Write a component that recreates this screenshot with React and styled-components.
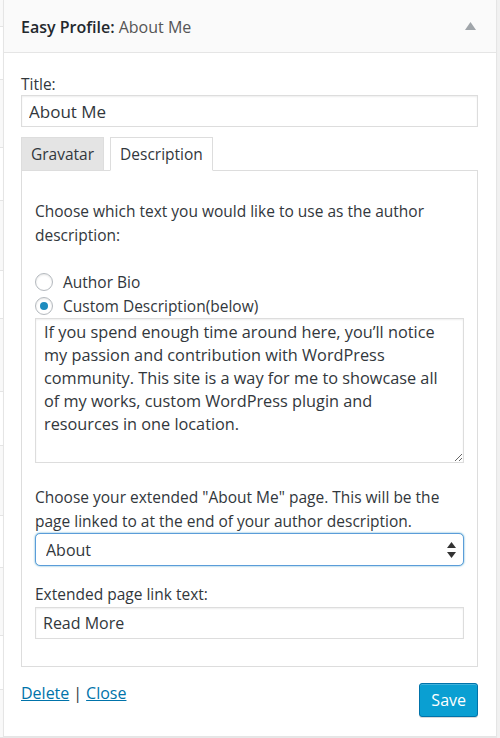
import React, { useState } from 'react';
import styled, { createGlobalStyle } from 'styled-components';

const GlobalStyle = createGlobalStyle`
  html, body {
    margin: 0;
    padding: 0;
    background: #f1f1f1;
  }
  body {
    font-family: "Open Sans", "Liberation Sans", sans-serif;
    color: #32373c;
  }
  * {
    box-sizing: border-box;
  }
`;

const backdropRows = [27, 53, 68, 54, 70, 48, 73, 54, 70, 53, 68, 54, 48];

function App() {
  const [tab, setTab] = useState('description');
  const [source, setSource] = useState('custom');

  return (
    <>
      <GlobalStyle />
      <Page>
        <Backdrop>
          {backdropRows.map((h, i) => (
            <BackdropRow key={i} style={{ height: h }} />
          ))}
        </Backdrop>
        <Widget>
          <WidgetHeader>
            <WidgetTitle>
              <strong>Easy Profile:</strong> About Me
            </WidgetTitle>
            <Toggle aria-label="Collapse">
              <svg width="11" height="8" viewBox="0 0 11 8">
                <polygon points="5.5,0 11,8 0,8" fill="#a0a5aa" />
              </svg>
            </Toggle>
          </WidgetHeader>

          <WidgetBody>
            <Label>Title:</Label>
            <TextInput defaultValue="About Me" />

            <Tabs>
              <Tab $active={tab === 'gravatar'} onClick={() => setTab('gravatar')}>
                Gravatar
              </Tab>
              <Tab $active={tab === 'description'} onClick={() => setTab('description')}>
                Description
              </Tab>
            </Tabs>

            <TabPanel>
              <Text>Choose which text you would like to use as the author description:</Text>

              <RadioList>
                <RadioRow>
                  <Radio
                    type="radio"
                    name="source"
                    checked={source === 'bio'}
                    onChange={() => setSource('bio')}
                  />
                  Author Bio
                </RadioRow>
                <RadioRow>
                  <Radio
                    type="radio"
                    name="source"
                    checked={source === 'custom'}
                    onChange={() => setSource('custom')}
                  />
                  Custom Description(below)
                </RadioRow>
              </RadioList>

              <TextArea
                defaultValue={
                  'If you spend enough time around here, you\u2019ll notice\nmy passion and contribution with WordPress\ncommunity. This site is a way for me to showcase all\nof my works, custom WordPress plugin and\nresources in one location.'
                }
              />

              <Text $top={22}>
                Choose your extended "About Me" page. This will be the page linked to at the end of
                your author description.
              </Text>
              <SelectWrap>
                <Select defaultValue="about">
                  <option value="about">About</option>
                  <option value="contact">Contact</option>
                </Select>
                <SelectArrows width="9" height="16" viewBox="0 0 9 16">
                  <polygon points="4.5,0 9,6 0,6" fill="#333" />
                  <polygon points="0,10 9,10 4.5,16" fill="#333" />
                </SelectArrows>
              </SelectWrap>

              <Label $top={18} $gap={3}>Extended page link text:</Label>
              <TextInput $small defaultValue="Read More" />
            </TabPanel>

            <Footer>
              <Links>
                <LinkText href="#">Delete</LinkText>
                <Sep>|</Sep>
                <LinkText href="#">Close</LinkText>
              </Links>
              <SaveButton>Save</SaveButton>
            </Footer>
          </WidgetBody>
        </Widget>
      </Page>
    </>
  );
}

export default App;

const Page = styled.div`
  display: flex;
  width: 500px;
  height: 738px;
  overflow: hidden;
`;

const Backdrop = styled.div`
  width: 3px;
  flex-shrink: 0;
  display: flex;
  flex-direction: column;
`;

const BackdropRow = styled.div`
  background: #fff;
  border-bottom: 1px solid #e5e5e5;
  &:nth-child(odd) {
    background: #f9f9f9;
  }
`;

const Widget = styled.div`
  width: 494px;
  height: 737px;
  flex-shrink: 0;
  background: #fff;
  border: 1px solid #e5e5e5;
  border-top: none;
  box-shadow: 0 1px 1px rgba(0, 0, 0, 0.04);
  display: flex;
  flex-direction: column;
`;

const WidgetHeader = styled.div`
  height: 53px;
  display: flex;
  align-items: center;
  justify-content: space-between;
  padding: 0 18px 0 17px;
  background: #fafafa;
  border-bottom: 1px solid #e5e5e5;
`;

const WidgetTitle = styled.div`
  font-size: 16px;
  color: #555;
  padding-top: 1px;

  strong {
    color: #23282d;
    font-weight: 600;
  }
`;

const Toggle = styled.button`
  border: none;
  background: transparent;
  padding: 0;
  margin-right: 2px;
  display: flex;
  cursor: pointer;
`;

const WidgetBody = styled.div`
  padding: 21px 18px 18px 17px;
  display: flex;
  flex-direction: column;
`;

const Label = styled.label`
  display: block;
  font-size: 15.5px;
  line-height: 20px;
  margin-top: ${(p) => p.$top || 0}px;
  margin-bottom: ${(p) => p.$gap || 1}px;
  color: #32373c;
`;

const TextInput = styled.input`
  width: 100%;
  height: 32px;
  border: 1px solid #ddd;
  box-shadow: inset 0 1px 2px rgba(0, 0, 0, 0.07);
  padding: 0 7px;
  font-family: inherit;
  font-size: ${(p) => (p.$small ? 16 : 17)}px;
  color: #32373c;
  outline: none;
  background: #fff;
`;

const Tabs = styled.div`
  display: flex;
  gap: 6px;
  margin-top: 10px;
  margin-bottom: -1px;
  position: relative;
  z-index: 1;
`;

const Tab = styled.button`
  height: 34px;
  padding: 0 9px;
  font-family: inherit;
  font-size: 15.5px;
  color: #32373c;
  border: 1px solid #ddd;
  border-bottom-color: ${(p) => (p.$active ? '#fff' : '#ddd')};
  background: ${(p) => (p.$active ? '#fff' : '#e4e4e4')};
  cursor: pointer;
`;

const TabPanel = styled.div`
  border: 1px solid #ddd;
  padding: 28px 13px 27px 13px;
  display: flex;
  flex-direction: column;
`;

const Text = styled.p`
  margin: ${(p) => p.$top || 0}px 0 0;
  font-size: 15.5px;
  line-height: 24px;
  color: #32373c;
`;

const RadioList = styled.div`
  margin-top: 23px;
  display: flex;
  flex-direction: column;
`;

const RadioRow = styled.label`
  display: flex;
  align-items: center;
  height: 24px;
  font-size: 15.5px;
  color: #32373c;
  cursor: pointer;
`;

const Radio = styled.input`
  appearance: none;
  width: 18px;
  height: 18px;
  margin: 0 10px 0 0;
  border: 1px solid #b4b9be;
  border-radius: 50%;
  background: #fff;
  box-shadow: inset 0 1px 2px rgba(0, 0, 0, 0.1);
  display: grid;
  place-items: center;

  &:checked::before {
    content: '';
    width: 8px;
    height: 8px;
    border-radius: 50%;
    background: #1e8cbe;
  }
`;

const TextArea = styled.textarea`
  width: 100%;
  height: 145px;
  border: 1px solid #ddd;
  box-shadow: inset 0 1px 2px rgba(0, 0, 0, 0.07);
  padding: 2px 8px;
  font-family: inherit;
  font-size: 16.3px;
  line-height: 23px;
  color: #32373c;
  outline: none;
  resize: vertical;
  white-space: pre-wrap;
`;

const SelectWrap = styled.div`
  position: relative;
`;

const Select = styled.select`
  appearance: none;
  width: 100%;
  height: 33px;
  padding: 0 10px;
  font-family: inherit;
  font-size: 16px;
  color: #32373c;
  background: #fff;
  border: 1px solid #5b9dd9;
  border-radius: 5px;
  box-shadow: 0 0 2px rgba(30, 140, 190, 0.8);
  outline: none;
`;

const SelectArrows = styled.svg`
  position: absolute;
  right: 8px;
  top: 9px;
  pointer-events: none;
`;

const Footer = styled.div`
  display: flex;
  justify-content: space-between;
  align-items: flex-start;
  padding-top: 16px;
`;

const Links = styled.div`
  font-size: 16px;
  line-height: 20px;
  color: #32373c;
`;

const LinkText = styled.a`
  color: #0073aa;
  text-decoration: underline;
`;

const Sep = styled.span`
  margin: 0 4px;
`;

const SaveButton = styled.button`
  height: 34px;
  padding: 0 11px;
  font-family: inherit;
  font-size: 16px;
  color: #fff;
  background: #0a9fd2;
  border: 1px solid #0073aa;
  border-radius: 3px;
  box-shadow: inset 0 1px 0 rgba(120, 200, 230, 0.5), 0 1px 0 rgba(0, 0, 0, 0.15);
  cursor: pointer;
`;
